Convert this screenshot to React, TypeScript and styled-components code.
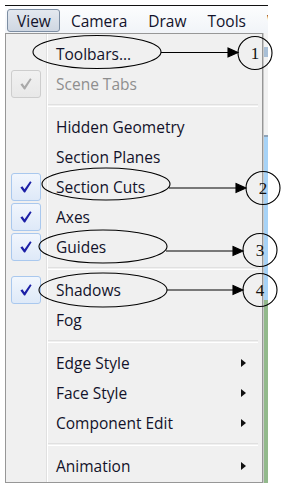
import React from "react";
import styled, { createGlobalStyle } from "styled-components";

const GlobalStyle = createGlobalStyle`
  html, body { margin: 0; padding: 0; background: #ffffff; }
  body { font-family: "Open Sans", "Noto Sans", sans-serif; }
`;

const Page = styled.div`
  position: relative;
  width: 284px;
  height: 489px;
  background: #ffffff;
  padding: 5px 0 0 5px;
  box-sizing: border-box;
  overflow: hidden;
`;

const Frame = styled.div`
  width: 263px;
  display: flex;
  flex-direction: column;
`;

const MenuBar = styled.div`
  height: 27px;
  border-top: 1px solid #111;
  background: linear-gradient(#fcfdfe, #f1f4f8);
  display: flex;
  align-items: center;
  padding-left: 2px;
  overflow: hidden;
  white-space: nowrap;
`;

const BarItem = styled.div<{ $active?: boolean }>`
  flex: none;
  height: 21px;
  display: flex;
  align-items: center;
  padding: 0 ${(p) => (p.$active ? 8 : 9)}px 0 ${(p) => (p.$active ? 9 : 10)}px;
  border: 1px solid ${(p) => (p.$active ? "#7d8ea3" : "transparent")};
  border-radius: 3px;
  background: ${(p) =>
    p.$active ? "linear-gradient(#e3e8ef, #cfd7e2)" : "transparent"};
  font-size: 15.5px;
  color: #12122a;
  margin-top: 2px;
`;

const Body = styled.div`
  display: flex;
  height: 450px;
`;

const Dropdown = styled.div`
  width: 258px;
  box-sizing: border-box;
  border: 1px solid #979797;
  padding: 5px 0 0 0;
  background: linear-gradient(
    to right,
    #f0f0f0 0 40px,
    #e0e0e0 40px 41px,
    #ffffff 41px 42px,
    #f0f0f0 42px
  );
  display: flex;
  flex-direction: column;
`;

const Strip = styled.div`
  width: 5px;
  background: linear-gradient(
    to bottom,
    #f3f3f3 0 14px,
    #a9bfd6 14px 24px,
    #f2f2f2 24px 102px,
    #8ea3b8 102px 104px,
    #a7d3f7 104px 267px,
    #93b98c 267px 450px
  );
  border-left: 1px solid #c9c9c9;
  box-sizing: border-box;
`;

const Row = styled.div`
  height: 30px;
  display: flex;
  align-items: center;
  font-size: 15.5px;
  color: #12122a;
`;

const CheckCell = styled.div`
  width: 40px;
  height: 30px;
  display: flex;
  align-items: center;
  padding-left: 5px;
  box-sizing: border-box;
`;

const CheckBox = styled.div<{ $disabled?: boolean }>`
  width: 30px;
  height: 28px;
  box-sizing: border-box;
  border-radius: 3px;
  border: 1px solid ${(p) => (p.$disabled ? "#cdcdcd" : "#a9c8ee")};
  background: ${(p) =>
    p.$disabled
      ? "linear-gradient(#f1f1f1, #e8e8e8)"
      : "linear-gradient(#f1f6fd, #dee9f8)"};
  display: flex;
  align-items: center;
  justify-content: center;
`;

const Label = styled.div<{ $disabled?: boolean }>`
  flex: 1;
  padding-left: 10px;
  color: ${(p) => (p.$disabled ? "#8e8e8e" : "#12122a")};
  white-space: nowrap;
`;

const SubArrow = styled.div`
  width: 0;
  height: 0;
  border-top: 4px solid transparent;
  border-bottom: 4px solid transparent;
  border-left: 5px solid #111;
  margin-right: 16px;
`;

const Separator = styled.div<{ $h: number }>`
  height: ${(p) => p.$h}px;
  display: flex;
  align-items: center;
  padding-left: 42px;
  padding-right: 4px;
  &::after {
    content: "";
    flex: 1;
    height: 1px;
    border-top: 1px solid #e0e0e0;
    border-bottom: 1px solid #ffffff;
  }
`;

const Overlay = styled.svg`
  position: absolute;
  left: 0;
  top: 0;
  pointer-events: none;
`;

const Check = ({ color }: { color: string }) => (
  <svg width="12" height="12" viewBox="0 0 12 12">
    <path
      d="M0.4 6.4 L2.4 5.3 L4.5 8.3 L10.1 0.3 L11.6 1.2 L5.1 11.6 L4.1 11.6 Z"
      fill={color}
    />
  </svg>
);

type Item =
  | { kind: "item"; label: string; check?: "on" | "off"; sub?: boolean; disabled?: boolean }
  | { kind: "sep"; h: number };

const items: Item[] = [
  { kind: "item", label: "Toolbars..." },
  { kind: "item", label: "Scene Tabs", check: "off", disabled: true },
  { kind: "sep", h: 13 },
  { kind: "item", label: "Hidden Geometry" },
  { kind: "item", label: "Section Planes" },
  { kind: "item", label: "Section Cuts", check: "on" },
  { kind: "item", label: "Axes", check: "on" },
  { kind: "item", label: "Guides", check: "on" },
  { kind: "sep", h: 13 },
  { kind: "item", label: "Shadows", check: "on" },
  { kind: "item", label: "Fog" },
  { kind: "sep", h: 13 },
  { kind: "item", label: "Edge Style", sub: true },
  { kind: "item", label: "Face Style", sub: true },
  { kind: "item", label: "Component Edit", sub: true },
  { kind: "sep", h: 13 },
  { kind: "item", label: "Animation", sub: true },
];

const callouts = [
  { ex: 97, ey: 52, erx: 64, ery: 16.5, ly: 52.5, x1: 161, tip: 238, cx: 255, cy: 53, n: "1" },
  { ex: 106, ey: 184, erx: 64, ery: 16, ly: 188, x1: 169, tip: 246, cx: 263, cy: 188, n: "2" },
  { ex: 103, ey: 246.5, erx: 64, ery: 16.5, ly: 251, x1: 166, tip: 243, cx: 260, cy: 250, n: "3" },
  { ex: 103, ey: 290, erx: 64, ery: 17, ly: 290, x1: 167, tip: 243, cx: 260, cy: 290, n: "4" },
];

export default function App() {
  return (
    <>
      <GlobalStyle />
      <Page>
        <Frame>
          <MenuBar>
            <BarItem $active>View</BarItem>
            <BarItem>Camera</BarItem>
            <BarItem>Draw</BarItem>
            <BarItem>Tools</BarItem>
            <BarItem>Window</BarItem>
          </MenuBar>
          <Body>
            <Dropdown>
              {items.map((it, i) =>
                it.kind === "sep" ? (
                  <Separator key={i} $h={it.h} />
                ) : (
                  <Row key={i}>
                    <CheckCell>
                      {it.check && (
                        <CheckBox $disabled={it.disabled}>
                          <Check color={it.disabled ? "#a9a9a9" : "#1c1fa6"} />
                        </CheckBox>
                      )}
                    </CheckCell>
                    <Label $disabled={it.disabled}>{it.label}</Label>
                    {it.sub && <SubArrow />}
                  </Row>
                )
              )}
            </Dropdown>
            <Strip />
          </Body>
        </Frame>
        <Overlay width="284" height="489" viewBox="0 0 284 489">
          {callouts.map((c) => (
            <g key={c.n} fill="none" stroke="#000" strokeWidth="1.1">
              <ellipse cx={c.ex} cy={c.ey} rx={c.erx} ry={c.ery} />
              <line x1={c.x1} y1={c.ly} x2={c.tip - 9} y2={c.ly} />
              <path
                d={`M${c.tip - 10} ${c.ly - 4.5} L${c.tip} ${c.ly} L${c.tip - 10} ${c.ly + 4.5} Z`}
                fill="#000"
              />
              <ellipse cx={c.cx} cy={c.cy} rx={17} ry={16.5} />
              <text
                x={c.cx}
                y={c.cy + 6}
                textAnchor="middle"
                fontFamily='"Liberation Serif", serif'
                fontSize="17"
                fill="#111"
                stroke="none"
              >
                {c.n}
              </text>
            </g>
          ))}
        </Overlay>
      </Page>
    </>
  );
}
